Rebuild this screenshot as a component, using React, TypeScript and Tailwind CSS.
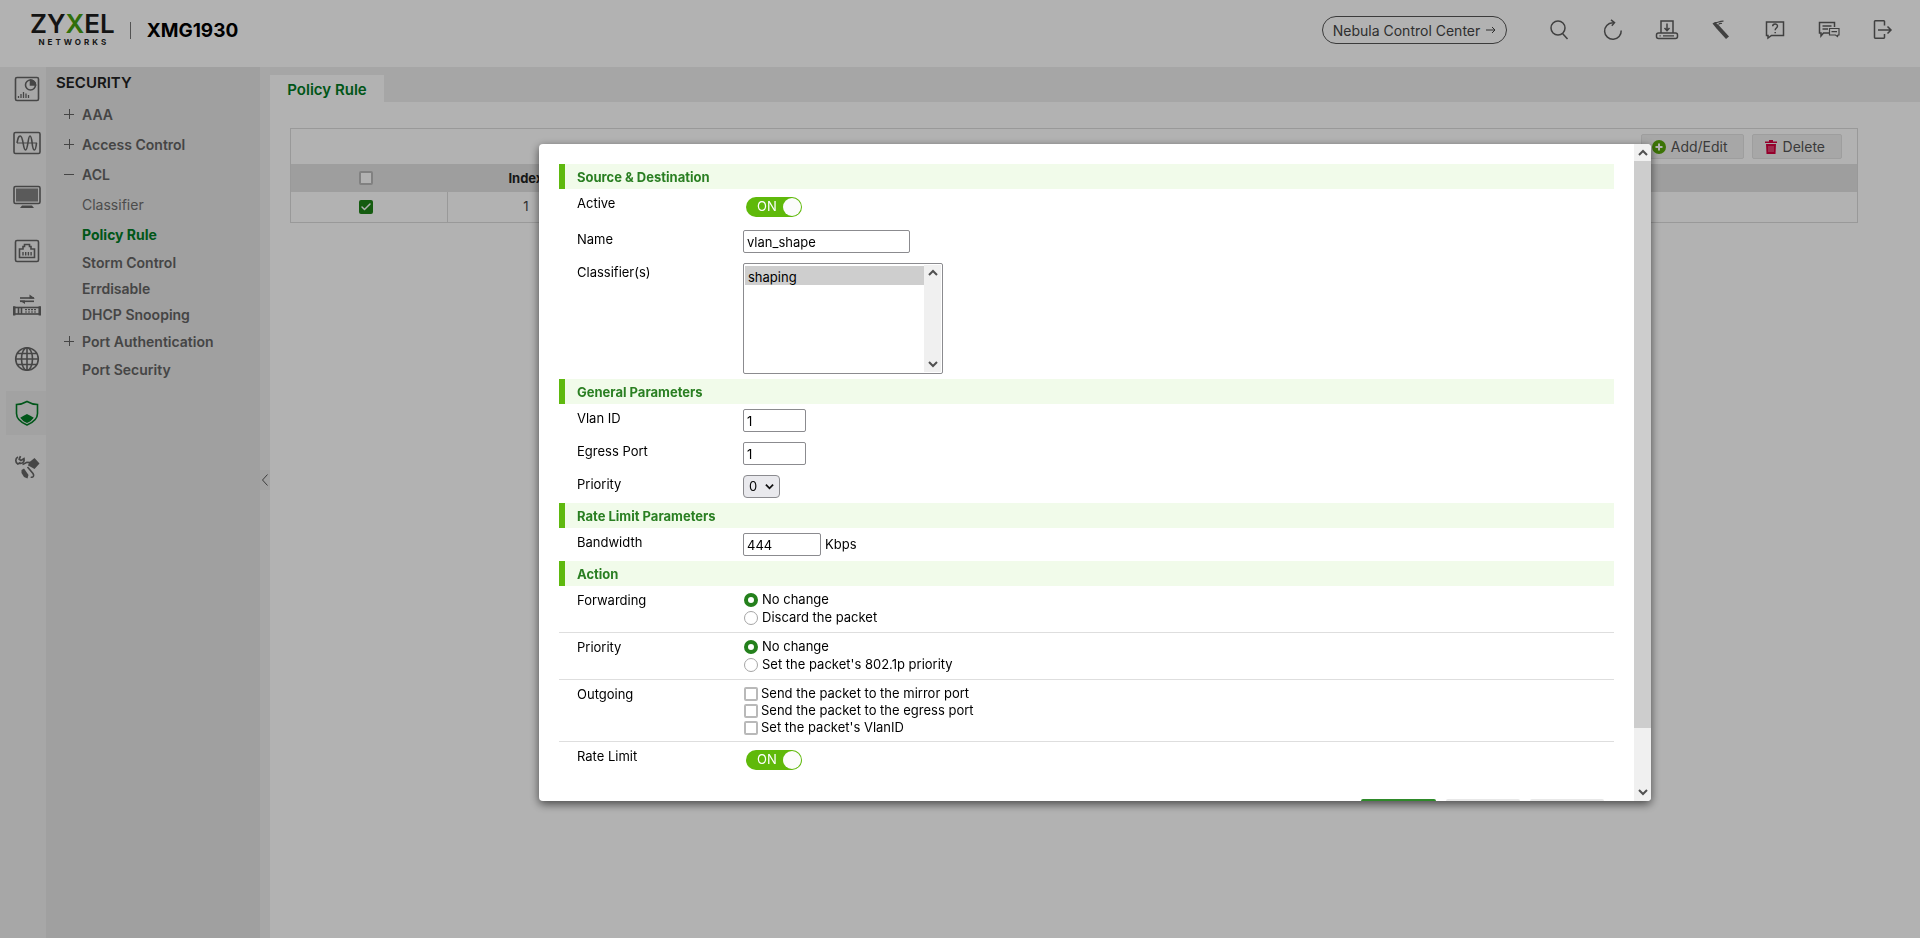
import type { ReactNode } from 'react';
import { Check } from 'lucide-react';

const menu = [
    { label: 'AAA', mark: '+', height: 'h-[30px]' },
    { label: 'Access Control', mark: '+', height: 'h-[30px]' },
    { label: 'ACL', mark: '-', height: 'h-[30px]' },
    { label: 'Classifier', tone: 'font-normal text-[#6e6e6e]', height: 'h-[30px]' },
    { label: 'Policy Rule', tone: 'font-bold text-[#007b25]', height: 'h-[30px]' },
    { label: 'Storm Control', height: 'h-[26px]' },
    { label: 'Errdisable', height: 'h-[26px]' },
    { label: 'DHCP Snooping', height: 'h-[26px]' },
    { label: 'Port Authentication', mark: '+', height: 'h-7' },
    { label: 'Port Security', height: 'h-7' },
];

const railIcons: { name: string; active?: boolean; drawing: ReactNode }[] = [
    {
        name: 'Dashboard',
        drawing: (
            <>
                <rect x="2.5" y="2.5" width="23" height="23" rx="1.5" />
                <circle cx="17.5" cy="10" r="5" />
                <path d="M17.5 5v5h5a5 5 0 0 0-5-5z" fill="currentColor" />
                <path d="M5.5 23v-2M8 23v-4M10.5 23v-6M13 23v-4.5M15.5 23v-3" strokeWidth="1.3" />
            </>
        ),
    },
    {
        name: 'Monitor',
        drawing: (
            <>
                <rect x="1" y="3.5" width="26" height="21" rx="1.5" />
                <path d="M4 14h20" strokeWidth="1" />
                <path d="M4 14C5 9 5.5 7 7.2 7c3.3 0 2.700 14 5.300 14S14.800 7 17 7c2.700 0 1.500 14 4.300 14 1.400 0 1.800-3 2.200-7" />
            </>
        ),
    },
    {
        name: 'System',
        drawing: (
            <>
                <rect x="1" y="3.5" width="26" height="17" rx="1.5" />
                <rect x="3" y="5.5" width="22" height="13" fill="currentColor" opacity="0.8" stroke="none" />
                <path d="M9 22.5h10l2 2.5H7z" fill="currentColor" stroke="none" />
            </>
        ),
    },
    {
        name: 'Port',
        drawing: (
            <>
                <rect x="2.5" y="3.5" width="23" height="21" rx="1.5" />
                <path d="M6.5 20.5v-8.500H10V9.500h1.500v-2h5v2H18V12h3.500v8.500z" />
                <path d="M10 18.500v-3.500M12.700 18.500v-3.500M15.400 18.500v-3.500M18.100 18.500v-3.500" strokeWidth="1.400" />
            </>
        ),
    },
    {
        name: 'Switching',
        drawing: (
            <>
                <path d="M7 7h14" />
                <path d="M16.500 3.500L22 7.500h-5.500zM12 13L6.500 9.500H12z" fill="currentColor" stroke="none" />
                <path d="M7 10.300h14" />
                <rect x="1.500" y="16.500" width="25" height="6.500" />
                <path d="M1.200 15.200v9.400M26.800 15.200v9.400" strokeWidth="2.400" />
                <path d="M5.500 16.500v6.500M8.500 16.500v6.500" />
                <path d="M12 18.700h11.500M12 21h11.500" strokeDasharray="2 1" strokeWidth="1.200" />
            </>
        ),
    },
    {
        name: 'Networking',
        drawing: (
            <>
                <circle cx="14" cy="14" r="11.300" />
                <ellipse cx="14" cy="14" rx="5.500" ry="11.300" />
                <path d="M14 2.700v22.600M2.700 14h22.600M4.500 8.500h19M4.500 19.500h19" />
            </>
        ),
    },
    {
        name: 'Security',
        active: true,
        drawing: (
            <>
                <path d="M14 2.500c3.500 2 7 3 10.500 3v9c0 5.500-4.500 9-10.500 11.500C8 23.500 3.500 20 3.500 14.500v-9c3.500 0 7-1 10.500-3z" />
                <path d="M14 16l3 1.500 2.500 1.500-2.500 2.500-3 1.500-3-1.500-2.500-2.500 2.500-1.500z" fill="currentColor" />
            </>
        ),
    },
    {
        name: 'Maintenance',
        drawing: (
            <>
                <path d="M7.500 3.200L6.200 6.200l1.800 1.300 3-2c.8 3-1.500 5.500-4.500 4.800M5 4C2 5.500 2.200 9.500 4.800 11l2.700-1.500" strokeWidth="1.700" />
                <path d="M9.500 11.500l4.500-2.300 3.500.3" />
                <path d="M16 9.500l5.500-4.500 5 5.500-5 5.500-3.500-2-3-1.500z" fill="currentColor" stroke="none" />
                <path d="M8.500 17l2.500-1.500 4.500 6.500-1 3.500-3.500-1.500-2.500-4z" fill="currentColor" stroke="none" />
                <path d="M14.500 14l5.500 6.500c1.500 2.300.3 4.200-2.300 3.700" />
            </>
        ),
    },
];

const headerIcons: { name: string; drawing: ReactNode }[] = [
    {
        name: 'Search',
        drawing: (
            <>
                <circle cx="11" cy="10" r="7" />
                <path d="M15.500 15.500L20.500 21" />
            </>
        ),
    },
    {
        name: 'Refresh',
        drawing: <path d="M20.200 12.500A8.300 8.300 0 1 1 11.500 4.700h2M10 1.800l3.500 2.900-2.700 3" />,
    },
    {
        name: 'Save',
        drawing: (
            <>
                <path d="M6 15V3h12v12M12 5.500v7M9.500 10l2.500 2.700 2.500-2.700" />
                <rect x="1.500" y="15" width="21" height="5.500" rx="2" />
                <path d="M4.500 17.800h1.200M8 17.800h11" strokeWidth="1.200" />
            </>
        ),
    },
    {
        name: 'Wizard',
        drawing: (
            <>
                <path d="M3.500 5.500l2.500-1.500 4 3.500L20 18.500 17 21 7.500 10.500z" fill="currentColor" stroke="none" />
                <path d="M6 4.500c3 .5 4-1.500 8.500-1.300M9.500 6.500c1-1.300 2-1.500 3.500-1" strokeWidth="1.200" />
            </>
        ),
    },
    {
        name: 'Help',
        drawing: (
            <>
                <path d="M3.500 4h17v13.500H8.500L5 20v-2.500H3.500z" />
                <path d="M9.700 8.300c0-3 4.800-3 4.800-.2 0 1.900-2.300 2-2.300 4.100M12.200 14v1.300" />
            </>
        ),
    },
    {
        name: 'Forum',
        drawing: (
            <>
                <path d="M12 15H6.500L4 18v-3H2.500V4.500h15V9M5.500 8h9M5.500 11h5.500" />
                <path d="M12.500 10.500h9.500v6.500h-1l-.5 1.500-2-1.500h-6zM14.500 13.700h5.500" strokeWidth="1.200" />
            </>
        ),
    },
    {
        name: 'Logout',
        drawing: <path d="M13.500 7.500v-4q0-.7-.7-.7H4.200q-.7 0-.7.700v16q0 .7.700.7h8.600q.7 0 .7-.7V16M7 12h13M16.500 8.500L20 12l-3.500 3.500" />,
    },
];

const box = 'size-[14px] shrink-0 appearance-none border-2 border-[#b9b9b9] bg-white rounded-[2px]';
const field = 'h-[23px] rounded-[2px] border border-[#8b8b8f] bg-white px-[3px] text-[13px] text-black';

function Section({ children }: { children: ReactNode }) {
    return (
        <h2 className="flex h-[25px] items-center border-l-[6px] border-[#5fb90f] bg-[#f1fbea] pt-[2px] pl-3 text-[13px] font-bold text-[#2a7f22]">
            {children}
        </h2>
    );
}

function Row({ label, htmlFor, line, children }: { label: string; htmlFor?: string; line?: boolean; children: ReactNode }) {
    return (
        <div className={line ? 'flex border-b border-[#dedede] py-[5px] pl-[18px]' : 'flex py-[5px] pl-[18px]'}>
            {htmlFor ? (
                <label htmlFor={htmlFor} className="w-[166px] shrink-0 leading-[18px]">{label}</label>
            ) : (
                <span className="w-[166px] shrink-0 leading-[18px]">{label}</span>
            )}
            {children}
        </div>
    );
}

function Toggle({ id }: { id: string }) {
    return (
        <div className="ml-[3px] flex py-[3px]">
            <label htmlFor={id} className="flex h-5 w-14 items-center justify-between rounded-full bg-[#5fb90a] pr-px pl-[11px] text-[13px] text-white">
                ON
                <input id={id} type="checkbox" role="switch" defaultChecked className="size-[18px] appearance-none rounded-full bg-[#fbfcfb]" />
            </label>
        </div>
    );
}

function Radio({ name, label, checked }: { name: string; label: string; checked?: boolean }) {
    return (
        <label className="flex h-[18px] items-center gap-1">
            <input
                type="radio"
                name={name}
                defaultChecked={checked}
                className="size-[14px] appearance-none rounded-full border border-[#a5a5a5] bg-white checked:border-4 checked:border-[#24801c]"
            />
            {label}
        </label>
    );
}

function Chevron({ up }: { up?: boolean }) {
    return (
        <svg viewBox="0 0 10 10" className="size-[10px]" fill="none" stroke="#505050" strokeWidth="2">
            <path d={up ? 'M1 7l4-4 4 4' : 'M1 3l4 4 4-4'} />
        </svg>
    );
}

function Header() {
    return (
        <header className="flex h-[67px] shrink-0 items-start bg-white pr-[25px] pl-[30px]">
            <div className="mt-3 flex flex-col items-center">
                <span className="text-[26px] leading-6 font-semibold text-[#1e1e1e]">
                    ZY<span className="text-[#45a010]">X</span>EL
                </span>
                <span className="mt-px pl-[3px] text-[8px] leading-[10px] font-bold tracking-[3px] text-[#1e1e1e]">NETWORKS</span>
            </div>
            <span className="mt-[22px] ml-[15px] h-[17px] w-px bg-[#777777]" />
            <h1 className="mt-[19px] ml-4 text-[19px] leading-6 font-bold text-black">XMG1930</h1>
            <button className="mt-4 ml-auto flex h-7 w-[185px] items-center justify-center gap-[6px] rounded-full border border-[#555555] text-[14px] text-[#444444]">
                Nebula Control Center
                <svg viewBox="0 0 10 10" className="size-[10px]" fill="none" stroke="currentColor">
                    <path d="M0 5h9M6 2l3 3-3 3" />
                </svg>
            </button>
            <div className="mt-[18px] ml-10 flex gap-[30px]">
                {headerIcons.map((icon) => (
                    <button key={icon.name} aria-label={icon.name} className="size-6 text-[#5c5c5c]">
                        <svg viewBox="0 0 24 24" className="size-6" fill="none" stroke="currentColor" strokeWidth="1.5">
                            {icon.drawing}
                        </svg>
                    </button>
                ))}
            </div>
        </header>
    );
}

function Sidebar() {
    return (
        <>
            <nav aria-label="Sections" className="flex w-[46px] shrink-0 flex-col gap-[10px] bg-[#f0f0f0] pl-[6px]">
                {railIcons.map((icon) => (
                    <button
                        key={icon.name}
                        aria-label={icon.name}
                        className={icon.active ? 'h-11 bg-[#e8e8e8] pl-[7px] text-[#007b25]' : 'h-11 pl-[7px] text-[#656565]'}
                    >
                        <svg viewBox="0 0 28 28" className="size-7" fill="none" stroke="currentColor" strokeWidth="1.6">
                            {icon.drawing}
                        </svg>
                    </button>
                ))}
            </nav>
            <nav aria-label="Security" className="w-[214px] shrink-0 bg-[#e5e5e5]">
                <h2 className="flex h-8 items-center pl-[10px] text-[15px] font-semibold text-[#222222]">SECURITY</h2>
                <ul>
                    {menu.map((item) => (
                        <li key={item.label} className={item.height}>
                            <a href="#" className="flex h-full items-center pl-[18px] text-[14px] text-[#646464]">
                                <span className="w-[18px]">
                                    {item.mark && (
                                        <svg viewBox="0 0 10 10" className="size-[10px]" fill="none" stroke="currentColor">
                                            <path d={item.mark === '+' ? 'M0 5.5h10M5.5 0v10' : 'M0 5.5h10'} />
                                        </svg>
                                    )}
                                </span>
                                <span className={item.tone ?? 'font-semibold'}>{item.label}</span>
                            </a>
                        </li>
                    ))}
                </ul>
            </nav>
            <div className="w-[10px] shrink-0 bg-[#f0f0f0] pt-[403px]">
                <button aria-label="Collapse menu" className="flex h-5 w-full items-center justify-center bg-[#e8e8e8] text-[#555555]">
                    <svg viewBox="0 0 6 12" className="h-3 w-[6px]" fill="none" stroke="currentColor">
                        <path d="M5.5 0.5L0.5 6l5 5.5" />
                    </svg>
                </button>
            </div>
        </>
    );
}

function RuleTable() {
    return (
        <div className="mt-[26px] mr-[62px] ml-5 border border-[#dcdcdc]">
            <div className="flex h-[35px] items-center justify-end gap-2 pr-[15px]">
                <button className="flex h-[25px] items-center gap-[5px] rounded-[2px] border border-[#e2e2e2] bg-[#f0f0f0] pr-[15px] pl-[10px] text-[14px] text-[#555555]">
                    <svg viewBox="0 0 14 14" className="size-[14px]">
                        <circle cx="7" cy="7" r="7" fill="#57a60a" />
                        <path d="M7 3.5v7M3.5 7h7" stroke="#ffffff" strokeWidth="2" />
                    </svg>
                    Add/Edit
                </button>
                <button className="flex h-[25px] items-center gap-[6px] rounded-[2px] border border-[#e2e2e2] bg-[#f0f0f0] pr-4 pl-3 text-[14px] text-[#555555]">
                    <svg viewBox="0 0 12 14" className="h-[14px] w-3" fill="#d6003f">
                        <path d="M0 1.5h4V0h4v1.5h4V3H0zM1 4h10l-.5 10h-9z" />
                        <path d="M4 6v6M6 6v6M8 6v6" stroke="#f0a0b8" strokeWidth="0.8" />
                    </svg>
                    Delete
                </button>
            </div>
            <table className="w-full table-fixed border-collapse text-[13px]">
                <thead>
                    <tr className="h-7 bg-[#e3e3e3] text-[#222222]">
                        <th className="w-1/10 pr-[6px]">
                            <input type="checkbox" aria-label="Select all" className={`${box} mx-auto block`} />
                        </th>
                        <th className="w-1/10 pt-[2px] font-bold">Index</th>
                        <th />
                    </tr>
                </thead>
                <tbody>
                    <tr className="h-[30px] text-[#444444]">
                        <td className="pr-[6px]">
                            <span className="mx-auto grid size-[14px] rounded-[2px] bg-[#1f8417] text-white">
                                <input type="checkbox" aria-label="Select rule 1" defaultChecked className="col-start-1 row-start-1 size-[14px] appearance-none" />
                                <Check className="pointer-events-none col-start-1 row-start-1 size-3 place-self-center" strokeWidth={3} />
                            </span>
                        </td>
                        <td className="border-l border-[#dcdcdc] text-center">1</td>
                        <td className="border-l border-[#dcdcdc]" />
                    </tr>
                </tbody>
            </table>
        </div>
    );
}

function PolicyDialog() {
    return (
        <div role="dialog" aria-label="Policy Rule" className="flex h-[70vh] w-full overflow-hidden rounded-[4px] bg-white text-[13px] text-black shadow-[0_3px_10px_rgba(0,0,0,0.6)]">
            <form className="min-w-0 flex-1 overflow-hidden px-5 pt-5">
                <Section>Source &amp; Destination</Section>
                <Row label="Active" htmlFor="active">
                    <Toggle id="active" />
                </Row>
                <Row label="Name" htmlFor="name">
                    <input id="name" defaultValue="vlan_shape" className={`${field} w-[167px]`} />
                </Row>
                <Row label="Classifier(s)" htmlFor="classifiers">
                    <div className="flex h-[111px] w-[200px] rounded-[2px] border border-[#8b8b8f] p-px">
                        <select id="classifiers" multiple defaultValue={['shaping']} className="h-full flex-1 overflow-hidden bg-white pt-px">
                            <option value="shaping" className="bg-[#cecece] px-[3px] pt-[3px] pb-0 leading-[18px] text-black">shaping</option>
                        </select>
                        <div aria-hidden="true" className="flex w-[17px] flex-col items-center justify-between bg-[#f0f0f0] py-[3px]">
                            <Chevron up />
                            <Chevron />
                        </div>
                    </div>
                </Row>
                <Section>General Parameters</Section>
                <Row label="Vlan ID" htmlFor="vlan">
                    <input id="vlan" defaultValue="1" className={`${field} w-[63px]`} />
                </Row>
                <Row label="Egress Port" htmlFor="egress">
                    <input id="egress" defaultValue="1" className={`${field} w-[63px]`} />
                </Row>
                <Row label="Priority" htmlFor="priority">
                    <div className="grid w-[37px]">
                        <select id="priority" defaultValue="0" className="col-start-1 row-start-1 h-[23px] w-full appearance-none rounded-[4px] border border-[#8b8b8f] bg-[#e9e9ed] pl-[5px] text-[13px]">
                            <option>0</option>
                        </select>
                        <svg viewBox="0 0 10 10" className="pointer-events-none col-start-1 row-start-1 mr-[6px] size-[9px] self-center justify-self-end" fill="none" stroke="#111111" strokeWidth="2">
                            <path d="M1 3l4 4 4-4" />
                        </svg>
                    </div>
                </Row>
                <Section>Rate Limit Parameters</Section>
                <Row label="Bandwidth" htmlFor="bandwidth">
                    <div className="flex items-center gap-1">
                        <input id="bandwidth" defaultValue="444" className={`${field} w-[78px]`} />
                        Kbps
                    </div>
                </Row>
                <Section>Action</Section>
                <Row label="Forwarding" line>
                    <div role="radiogroup" aria-label="Forwarding" className="pl-px">
                        <Radio name="forwarding" label="No change" checked />
                        <Radio name="forwarding" label="Discard the packet" />
                    </div>
                </Row>
                <Row label="Priority" line>
                    <div role="radiogroup" aria-label="Priority" className="pl-px">
                        <Radio name="priority-action" label="No change" checked />
                        <Radio name="priority-action" label="Set the packet's 802.1p priority" />
                    </div>
                </Row>
                <Row label="Outgoing" line>
                    <div role="group" aria-label="Outgoing" className="pl-px">
                        {['Send the packet to the mirror port', 'Send the packet to the egress port', "Set the packet's VlanID"].map((label) => (
                            <label key={label} className="flex h-[17px] items-center gap-[3px]">
                                <input type="checkbox" className={box} />
                                {label}
                            </label>
                        ))}
                    </div>
                </Row>
                <Row label="Rate Limit" htmlFor="rate-limit">
                    <Toggle id="rate-limit" />
                </Row>
                <div className="mt-[21px] flex justify-end gap-[10px] pr-[10px]">
                    <button type="button" aria-label="Apply" className="h-7 w-[75px] rounded-[2px] bg-[#2f8a2a]" />
                    <button type="button" aria-label="Clear" className="h-7 w-[74px] rounded-[2px] bg-[#e8e8e8]" />
                    <button type="button" aria-label="Cancel" className="h-7 w-[74px] rounded-[2px] bg-[#e8e8e8]" />
                </div>
            </form>
            <div aria-hidden="true" className="flex w-[17px] shrink-0 flex-col bg-[#f0f0f0]">
                <div className="grid h-[17px] place-items-center">
                    <Chevron up />
                </div>
                <div className="flex-1">
                    <div className="h-[91%] bg-[#cdcdcd]" />
                </div>
                <div className="grid h-[17px] place-items-center">
                    <Chevron />
                </div>
            </div>
        </div>
    );
}

export default function App() {
    return (
        <div className="flex min-h-screen flex-col bg-white font-[Inter,sans-serif]">
            <Header />
            <div className="flex flex-1">
                <Sidebar />
                <main className="min-w-0 flex-1 bg-white">
                    <div className="flex h-[35px] items-end bg-[#eeeeee]">
                        <button className="h-[27px] w-[114px] bg-white pt-1 text-[15px] font-semibold text-[#007b25]">Policy Rule</button>
                    </div>
                    <RuleTable />
                </main>
            </div>
            <div className="fixed inset-0 bg-black/30 pt-36 pr-[269px] pl-[539px]">
                <PolicyDialog />
            </div>
        </div>
    );
}
